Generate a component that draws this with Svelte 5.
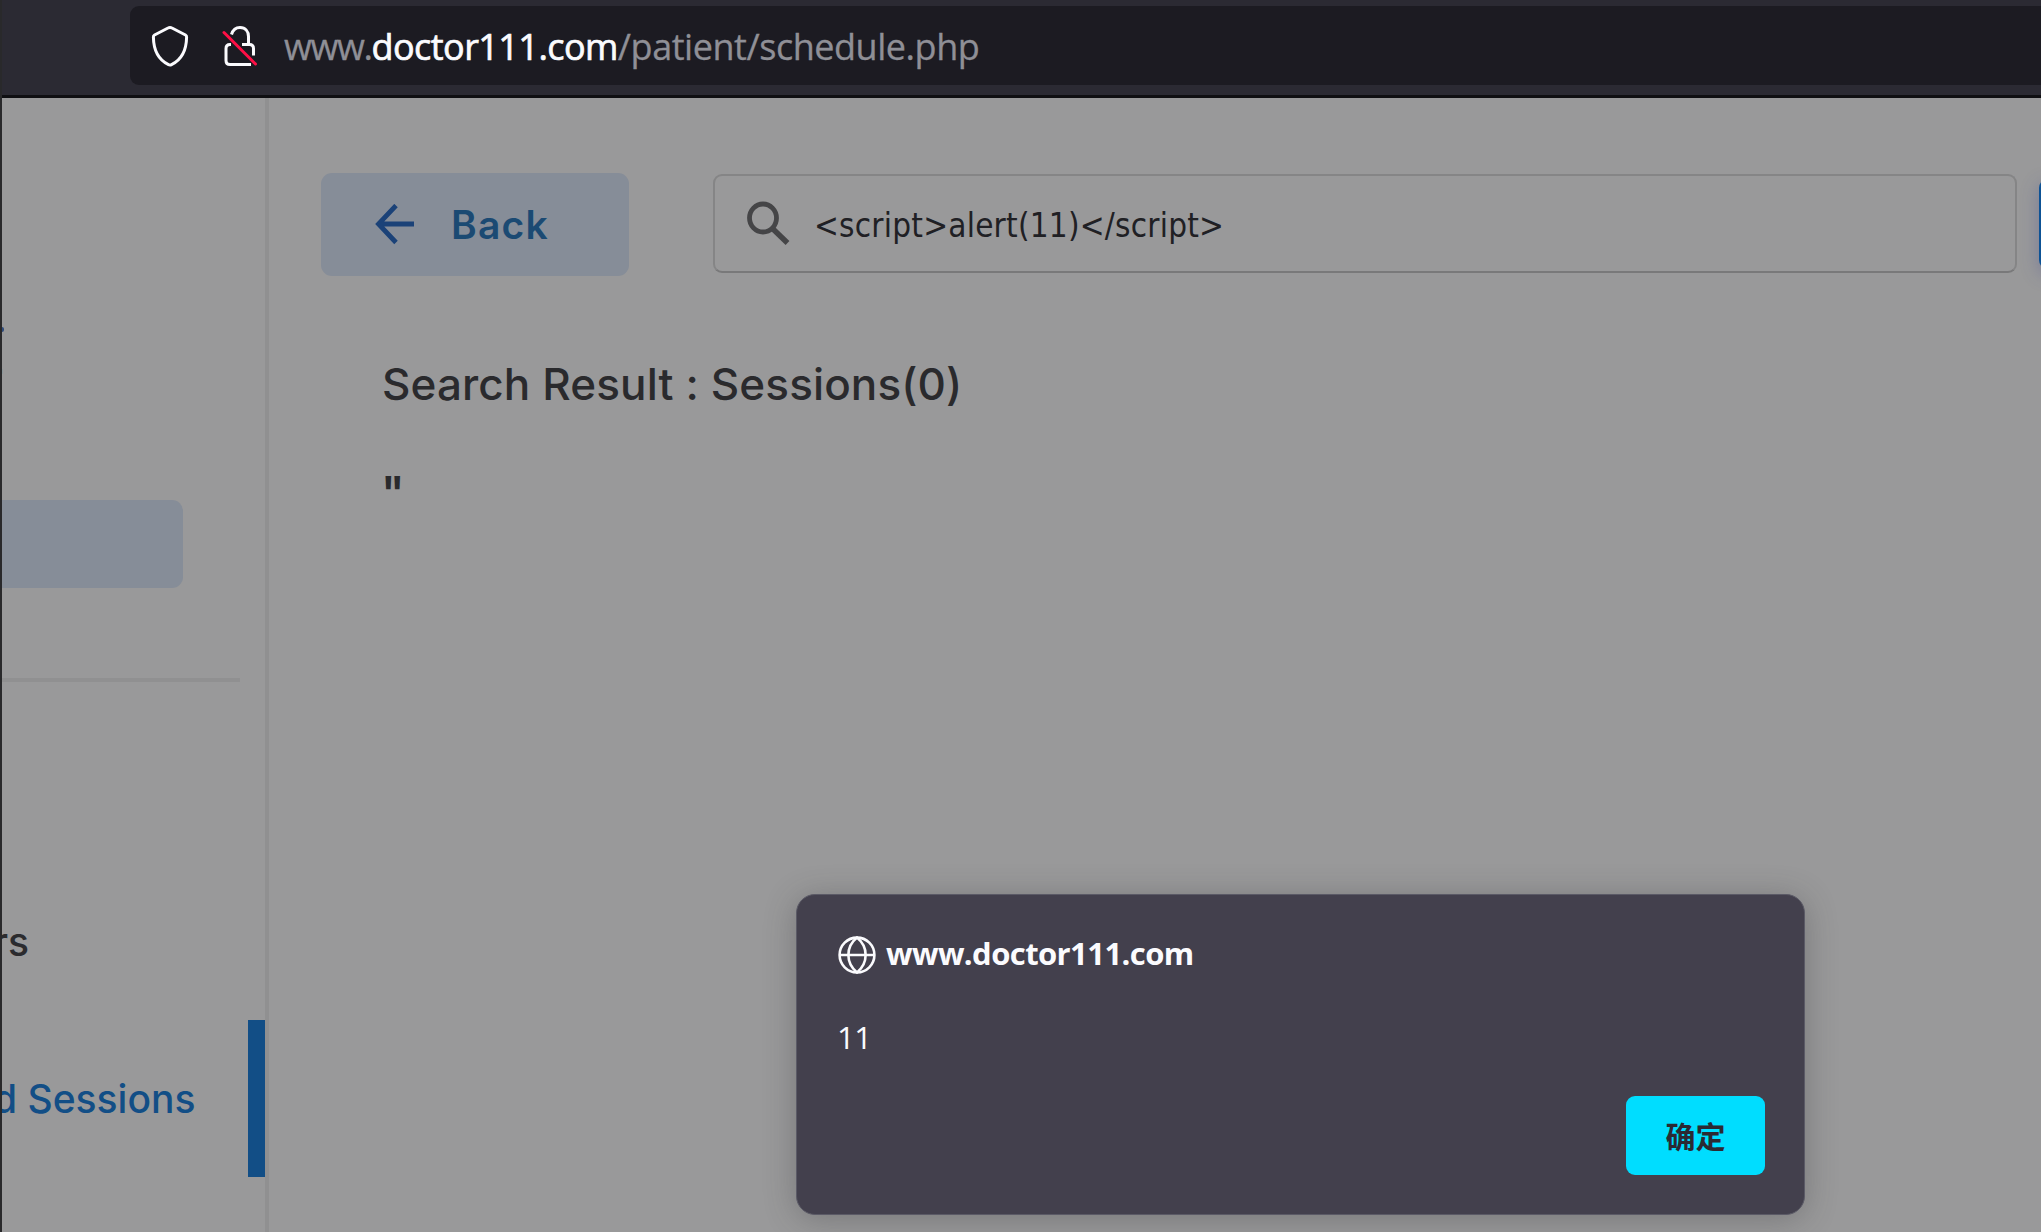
<script>
  const query = '<script>alert(11)<\/script>';
</script>

<div class="window">
  <header class="toolbar">
    <div class="urlbar">
      <svg class="shield" width="40" height="44" viewBox="0 0 40 44" fill="none" stroke="#fbfbfe" stroke-width="3" stroke-linejoin="round">
        <path d="M20 3.4 Q21 3.4 22 4 L35.5 11 Q36.7 11.7 36.6 13.2 C36.4 26 32 35.5 21.5 40.6 Q20 41.3 18.5 40.6 C8 35.5 3.6 26 3.4 13.2 Q3.3 11.7 4.5 11 L18 4 Q19 3.4 20 3.4Z" />
      </svg>
      <svg class="lock" width="40" height="44" viewBox="0 0 40 44" fill="none">
        <g stroke="#fbfbfe" stroke-width="3">
          <path d="M11.5 10.5 C13 5.5 16.300 3.500 20 3.500 C25.500 3.500 28.500 7.500 28.500 12.500 V20" />
          <path d="M11 20.500 H10 Q6 20.500 6 24.500 V36.500 Q6 40.500 10 40.500 H31" />
          <path d="M22 20.500 H29.500 Q33.500 20.500 33.500 24.500 V31.500" />
        </g>
        <path d="M4 8.500 L35.500 40" stroke="#ff0f45" stroke-width="3" stroke-linecap="round" />
      </svg>
      <div class="address"><span class="sub">www.</span><span class="host">doctor111.com</span><span class="path">/patient/schedule.php</span></div>
    </div>
  </header>

  <div class="page">
    <aside class="sidebar">
      <div class="profile"><i class="dot"></i><i class="dot faint"></i></div>
      <div class="logout"></div>
      <div class="rule"></div>
      <div class="item doctors"><span>rs</span></div>
      <div class="item active"><span>d Sessions</span></div>
    </aside>
    <main>
      <div class="actions">
        <button class="back">
          <svg width="40" height="42" viewBox="0 0 40 42" fill="none" stroke="#1b4278" stroke-width="4.8">
            <path d="M39 20 H4 M21 1.500 L3.500 20 L21 38.500" />
          </svg>
          <span>Back</span>
        </button>
        <div class="search">
          <svg width="44" height="46" viewBox="0 0 44 46" fill="none" stroke="#454547">
            <ellipse cx="16" cy="17" rx="13.500" ry="14" stroke-width="4.800" />
            <path d="M26 28 L40.500 42" stroke-width="5.500" />
          </svg>
          <span>{query}</span>
        </div>
        <div class="submit"></div>
      </div>
      <h1>Search Result : Sessions(0)</h1>
      <p class="quote">"</p>
    </main>
  </div>

  <div class="dialog" role="alertdialog">
    <div class="origin">
      <svg width="38" height="38" viewBox="0 0 38 38" fill="none" stroke="#fbfbfe" stroke-width="2.6">
        <circle cx="19" cy="19" r="17.400" />
        <path d="M1.600 19 H36.400 M19 1.600 C7.500 11 7.500 27 19 36.400 C30.500 27 30.500 11 19 1.600Z" />
      </svg>
      <strong>www.doctor111.com</strong>
    </div>
    <div class="message">11</div>
    <button class="ok">确定</button>
  </div>
</div>

<style>
  :global(body) { margin: 0; overflow: hidden; }
  .window { position: relative; box-sizing: border-box; width: 2041px; height: 1232px; overflow: hidden; display: flex; flex-direction: column; background: #99999a; border-left: 2px solid #29292b; font-family: Inter, "Liberation Sans", sans-serif; }
  button { border: 0; padding: 0; font: inherit; }
  svg { display: block; flex: none; }
  .toolbar { box-sizing: border-box; height: 98px; flex: none; padding: 6px 0 0 128px; background: #2b2a33; border-bottom: 3px solid #0f0f12; }
  .urlbar { height: 79px; display: flex; align-items: center; background: #1c1b22; border-radius: 9px 0 0 9px; }
  .shield { margin-left: 20px; }
  .lock { margin-left: 30px; }
  .address { margin-left: 24px; padding-top: 1px; font: 36px/79px "Open Sans", "Noto Sans", sans-serif; color: #8f8f96; white-space: nowrap; -webkit-text-stroke: .3px currentColor; }
  .sub { letter-spacing: -1.4px; }
  .host { color: #fbfbfe; letter-spacing: -.56px; -webkit-text-stroke-width: .7px; }
  .path { letter-spacing: -.46px; }
  .page { flex: 1; display: flex; min-height: 0; }
  .sidebar { box-sizing: border-box; width: 267px; flex: none; border-right: 4px solid #909091; overflow: hidden; }
  .profile { height: 402px; box-sizing: border-box; padding-top: 229px; }
  .dot { display: block; width: 2px; height: 5px; background: #2d4a7a; border-radius: 0 2px 2px 0; }
  .faint { margin-top: 37px; width: 1px; background: #8a979b; }
  .logout { width: 181px; height: 88px; background: #868d98; border-radius: 0 11px 11px 0; }
  .rule { width: 238px; height: 4px; margin-top: 90px; background: #909091; }
  .item { display: flex; align-items: center; justify-content: flex-start; box-sizing: border-box; height: 157px; font-size: 39px; font-weight: 500; white-space: nowrap; }
  .item span { margin-left: -9px; }
  .doctors { margin-top: 181px; color: #2b2b2e; }
  .active { color: #124e86; border-right: 17px solid #124e86; }
  main { flex: 1; min-width: 0; padding: 75px 0 0 52px; overflow: hidden; }
  .actions { display: flex; width: 1730px; height: 103px; }
  .back { width: 308px; flex: none; height: 103px; display: flex; align-items: center; padding-left: 54px; gap: 36px; border-radius: 11px; background: #868d98; color: #1b4a73; font-size: 39px; font-weight: 570; letter-spacing: 1.2px; }
  .search { box-sizing: border-box; width: 1304px; flex: none; height: 99px; margin: 1px 0 0 84px; padding-left: 32px; display: flex; align-items: center; gap: 23px; border: 2px solid #858586; border-bottom-color: #79797a; border-radius: 9px; color: #202024; font: 33px/1 "DejaVu Sans Condensed", "DejaVu Sans", sans-serif; letter-spacing: .22px; white-space: nowrap; }
  .search span { padding-top: 3px; }
  .submit { width: 60px; height: 90px; margin: 6px 0 0 22px; flex: none; border-radius: 9px; background: #0d5295; box-shadow: 0 5px 18px rgba(60, 70, 150, .35); }
  h1 { margin: 80px 0 0 61px; font-size: 44px; line-height: 56px; font-weight: 550; letter-spacing: .12px; color: #2a2a2d; white-space: nowrap; }
  .quote { margin: 53px 0 0 60px; font-size: 45px; line-height: 56px; font-weight: 600; color: #2a2a2d; }
  .dialog { position: absolute; left: 794px; top: 894px; box-sizing: border-box; width: 1009px; height: 321px; padding: 41px 39px 0 40px; display: flex; flex-direction: column; background: #43404d; border: 1px solid #5b5a66; border-radius: 19px; box-shadow: 0 4px 32px rgba(50, 50, 54, .32); color: #fbfbfe; font: 31px/38px "Open Sans", "Noto Sans", sans-serif; }
  .origin { display: flex; align-items: center; height: 38px; gap: 10px; }
  .origin svg { margin-left: 1px; }
  .origin strong { padding-bottom: 4px; letter-spacing: -.58px; }
  .message { margin-top: 44px; letter-spacing: -.4px; }
  .ok { align-self: flex-end; width: 139px; height: 79px; margin-top: 40px; border-radius: 9px; background: #00ddff; color: #2b2a33; font: 700 30px/77px "Noto Sans CJK SC", sans-serif; }
</style>
